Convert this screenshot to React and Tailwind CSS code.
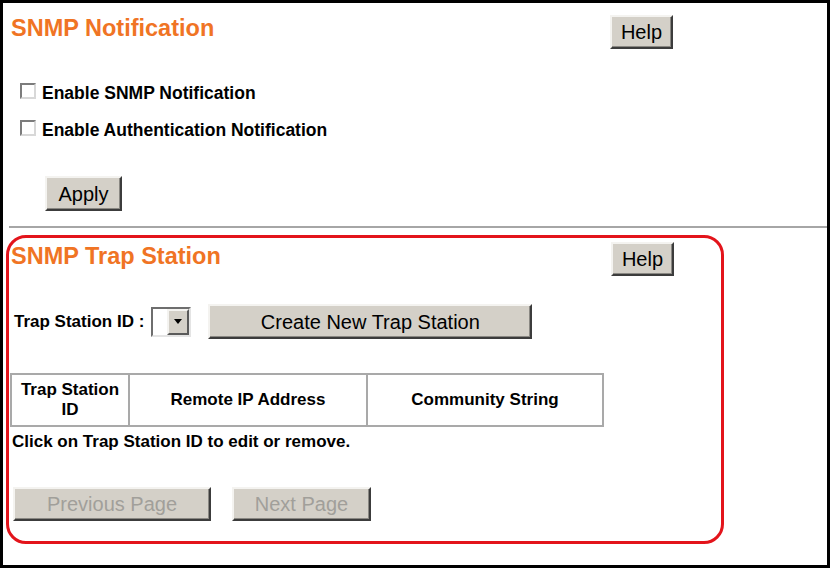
const FONT = "font-['Liberation_Sans',Arial,sans-serif]"

function Button({ className = '', disabled = false, children }) {
  return (
    <button
      type="button"
      className={`box-border flex items-center justify-center bg-[#d4d0c8] border-2 border-t-[#f4f3f0] border-l-[#f4f3f0] border-r-[#3c3c3c] border-b-[#3c3c3c] shadow-[inset_-1px_-1px_0_#8a8883] text-[20px] leading-none ${disabled ? 'text-[#a19f9a]' : 'text-black'} ${className}`}
    >
      {children}
    </button>
  )
}

function Check({ label }) {
  return (
    <label className="flex items-start h-[20px] gap-[6px]">
      <span className="box-border w-[16px] h-[16px] bg-white border-2 border-t-[#7c7c7c] border-l-[#7c7c7c] border-r-[#d8d8d8] border-b-[#d8d8d8]" />
      <span className="text-[17.5px] leading-[20px] font-bold text-black">{label}</span>
    </label>
  )
}

function SelectBox() {
  return (
    <div className="box-border flex w-[40px] h-[30px] border-2 border-t-[#6e6e6e] border-l-[#6e6e6e] border-r-[#e4e4e4] border-b-[#e4e4e4] bg-white">
      <div className="flex-1" />
      <div className="box-border w-[22px] h-full flex items-center justify-center bg-[#d4d0c8] border-2 border-t-[#f4f3f0] border-l-[#f4f3f0] border-r-[#5a5a5a] border-b-[#5a5a5a]">
        <span className="w-0 h-0 border-l-[4px] border-r-[4px] border-t-[5px] border-l-transparent border-r-transparent border-t-black" />
      </div>
    </div>
  )
}

export default function App() {
  return (
    <div className={`w-[831px] h-[570px] bg-white ${FONT}`}>
      <div className="box-border w-[830px] h-[568px] border-[3px] border-black">
        <div className="pl-[8px] pt-[12px] flex items-start">
          <h1 className="w-[599px] text-[23.5px] leading-[26px] font-bold text-[#f07424]">SNMP Notification</h1>
          <Button className="w-[63px] h-[34px]">Help</Button>
        </div>

        <div className="ml-[17px] mt-[34px] flex flex-col gap-[17px]">
          <Check label="Enable SNMP Notification" />
          <Check label="Enable Authentication Notification" />
        </div>

        <div className="ml-[42px] mt-[36px]">
          <Button className="w-[77px] h-[35px]">Apply</Button>
        </div>

        <div className="ml-[6px] mt-[15px] h-[2px] bg-[#a6a6a6]" />

        <div className="box-border ml-[3px] mt-[7px] w-[718px] h-[309px] border-[3px] border-[#e3141b] rounded-[20px] pl-[2px]">
          <div className="mt-[4px] flex items-start">
            <h2 className="w-[600px] pt-[1px] text-[23.5px] leading-[26px] font-bold text-[#f07424]">SNMP Trap Station</h2>
            <Button className="w-[63px] h-[34px]">Help</Button>
          </div>

          <div className="mt-[28px] ml-[3px] flex items-center h-[35px]">
            <span className="text-[17px] leading-[20px] font-bold text-black">Trap Station ID :</span>
            <div className="ml-[7px]">
              <SelectBox />
            </div>
            <Button className="ml-[17px] w-[324px] h-[35px]">Create New Trap Station</Button>
          </div>

          <div className="box-border mt-[34px] -ml-[1px] w-[594px] h-[54px] flex border-2 border-[#a9a9a9] text-[17px] leading-[20px] font-bold text-black text-center">
            <div className="w-[116px] flex items-center justify-center">
              Trap Station
              <br />
              ID
            </div>
            <div className="box-border w-[238px] border-l-2 border-[#a9a9a9] flex items-center justify-center">Remote IP Address</div>
            <div className="flex-1 border-l-2 border-[#a9a9a9] flex items-center justify-center">Community String</div>
          </div>

          <p className="mt-[5px] ml-[1px] text-[17px] leading-[20px] font-bold text-black">Click on Trap Station ID to edit or remove.</p>

          <div className="mt-[35px] ml-[2px] flex gap-[21px]">
            <Button disabled className="w-[198px] h-[34px]">Previous Page</Button>
            <Button disabled className="w-[139px] h-[34px]">Next Page</Button>
          </div>
        </div>
      </div>
    </div>
  )
}
